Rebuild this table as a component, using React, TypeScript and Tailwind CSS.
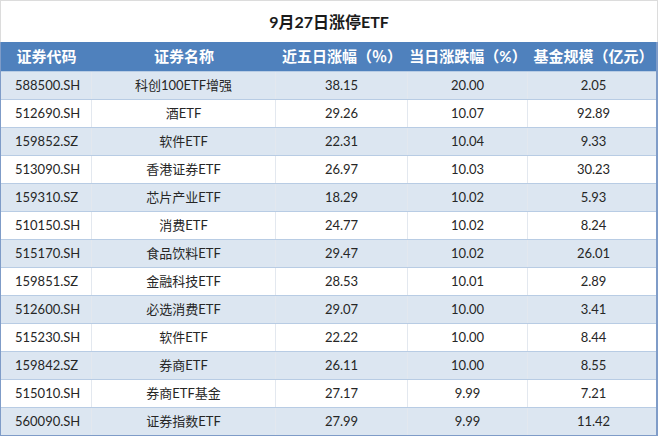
const rows: [string, string, string, string, string][] = [
  ['588500.SH', '科创100ETF增强', '38.15', '20.00', '2.05'],
  ['512690.SH', '酒ETF', '29.26', '10.07', '92.89'],
  ['159852.SZ', '软件ETF', '22.31', '10.04', '9.33'],
  ['513090.SH', '香港证券ETF', '26.97', '10.03', '30.23'],
  ['159310.SZ', '芯片产业ETF', '18.29', '10.02', '5.93'],
  ['510150.SH', '消费ETF', '24.77', '10.02', '8.24'],
  ['515170.SH', '食品饮料ETF', '29.47', '10.02', '26.01'],
  ['159851.SZ', '金融科技ETF', '28.53', '10.01', '2.89'],
  ['512600.SH', '必选消费ETF', '29.07', '10.00', '3.41'],
  ['515230.SH', '软件ETF', '22.22', '10.00', '8.44'],
  ['159842.SZ', '券商ETF', '26.11', '10.00', '8.55'],
  ['515010.SH', '券商ETF基金', '27.17', '9.99', '7.21'],
  ['560090.SH', '证券指数ETF', '27.99', '9.99', '11.42'],
]

const headers = ['证券代码', '证券名称', '近五日涨幅（％）', '当日涨跌幅（%）', '基金规模（亿元）']

const cols = 'grid grid-cols-[91px_184px_132px_120px_131px]'

export default function App() {
  return (
    <div
      className="h-[436px] w-[660px] overflow-hidden bg-white text-[#262626]"
      style={{ fontFamily: 'Lato, "Noto Sans CJK SC", sans-serif' }}
    >
      <div className="flex h-[42px] w-[658px] items-center justify-center border-l border-t border-r border-[#dcdcdc] text-[16px] font-bold text-[#1a1a1a]">
        9月27日涨停ETF
      </div>
      <div className="w-[658px] border-b-2 border-l border-r-2 border-[#7f9cc8]">
        <div className={`${cols} h-[29px] bg-[#4f81bd] text-[15px] font-bold text-white`}>
          {headers.map((h) => (
            <div key={h} className="flex items-center justify-center whitespace-nowrap">
              {h}
            </div>
          ))}
        </div>
        {rows.map((r, i) => (
          <div
            key={r[0]}
            className={`${cols} h-[28px] border-t border-[#b8cce4] text-[13px] ${i % 2 === 0 ? 'bg-[#dce6f1]' : 'bg-white'}`}
          >
            <div className="flex items-center border-r border-[#e3e8ef] pl-[14px]">{r[0]}</div>
            <div className="flex items-center justify-center border-r border-[#e3e8ef]">{r[1]}</div>
            <div className="flex items-center justify-center border-r border-[#e3e8ef]">{r[2]}</div>
            <div className="flex items-center justify-center border-r border-[#e3e8ef]">{r[3]}</div>
            <div className="flex items-center justify-center">{r[4]}</div>
          </div>
        ))}
      </div>
    </div>
  )
}
